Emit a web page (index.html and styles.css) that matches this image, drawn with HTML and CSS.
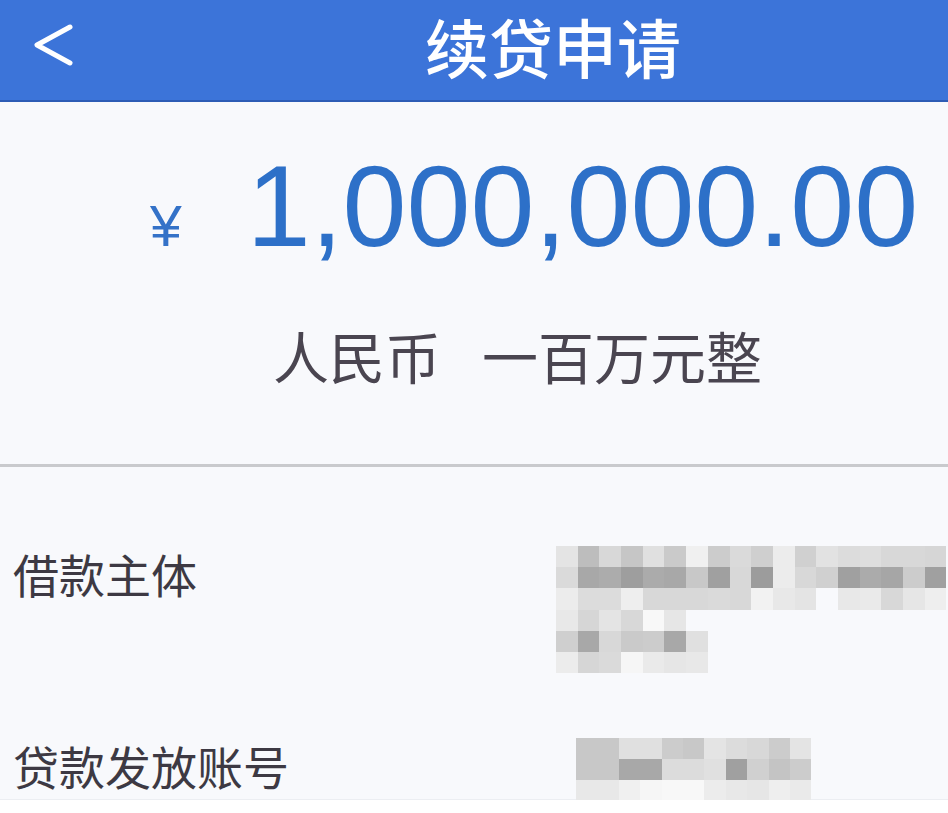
FILE: index.html
```html
<!DOCTYPE html>
<html>
<head>
<meta charset="UTF-8">
<title>续贷申请</title>
<link rel="stylesheet" href="styles.css">
</head>
<body>

	<div class="header">
		<a class="back">
			<svg width="42" height="44" viewBox="0 0 42 44"><polyline points="37,4 4,22 37,40" fill="none" stroke="#fff" stroke-width="5" stroke-linecap="round" stroke-linejoin="round"/></svg>
		</a>
		<h1 class="title">续贷申请</h1>
	</div>

	<div class="main">
		<div class="amount"><span class="yen">¥</span><span class="num">1,000,000.00</span></div>
		<div class="upper">人民币<span class="gap">一百万元整</span></div>
		<hr class="line">

		<div class="row">
			<div class="label">借款主体</div>
			<div class="mosaic" id="mosaic1"></div>
		</div>
		<div class="row row2">
			<div class="label">贷款发放账号</div>
			<div class="mosaic mosaic2" id="mosaic2"></div>
		</div>
	</div>

	<script>

		//가려진 영역 (모자이크)
		var m1 = [
			"e4 bd d8 c6 e0 ca f0 cc da cf ec d0 e2 dc de d8 d8 d6",
			"da a8 ac 9e ab a8 c8 a0 d8 9c ec d8 d0 a0 ab a6 cc a0",
			"ec dc dc ee d8 d8 d8 da d8 f2 e8 e4 -- e8 ea d8 e6 ee",
			"e8 d6 e4 d8 f8 e6",
			"cf a8 d8 ca cc a8 e0",
			"ec d6 da f6 ea e6 e8"
		];

		var m2 = [
			"c8 c8 e0 e0 cc c8 e4 dc d8 cc e4",
			"c8 c8 a8 a8 dc dc e0 a0 d0 c4 cc",
			"e8 e8 f0 f6 f8 f8 ec e8 e6 ee ea"
		];

		function fill(el, rows, cols) {
			for (var i=0; i<rows.length; i++) {
				var cells = rows[i].split(" ");
				for (var j=0; j<cols; j++) {
					var d = document.createElement("div");
					var c = cells[j];
					if (c && c != "--") {
						d.style.background = "#" + c + c + c;
					}
					el.appendChild(d);
				}
			}
		}

		fill(document.getElementById("mosaic1"), m1, 18);
		fill(document.getElementById("mosaic2"), m2, 11);

	</script>
</body>
</html>
```

FILE: styles.css
```css
body {
	margin: 0;
	background: #fff;
	font-family: "Noto Sans CJK SC", sans-serif;
}

.header {
	height: 100px;
	background: #3c74d9;
	border-bottom: 2px solid #2d5cb5;
	display: flex;
	align-items: flex-start;
}

.back {
	display: block;
	width: 42px;
	height: 44px;
	margin: 23px 0 0 33px;
}
.back svg {
	display: block;
}

.title {
	margin: 13px 0 0 350px;
	font-size: 64px;
	font-weight: 500;
	line-height: 64px;
	color: #fff;
}

.main {
	height: 697px;
	background: #f8f9fc;
	border-bottom: 1px solid #eceef2;
}

.amount {
	padding: 47px 0 0 150px;
	height: 121px;
	font-family: "Liberation Sans", Arial, sans-serif;
	font-size: 115px;
	line-height: 115px;
	color: #2d70c8;
	white-space: nowrap;
}
.yen {
	font-size: 57px;
	margin-right: 65px;
	vertical-align: 0;
	color: #3472c8;
}

.upper {
	margin-top: 57px;
	padding-left: 273px;
	font-size: 56px;
	line-height: 56px;
	color: #4a4550;
}
.upper .gap {
	margin-left: 41px;
}

.line {
	margin: 81px 0 0;
	height: 3px;
	border: 0;
	background: #c9cacd;
}

.row {
	display: flex;
	align-items: flex-start;
	margin-top: 79px;
}
.row2 {
	margin-top: 65px;
}

.label {
	width: 543px;
	padding-left: 13px;
	margin-top: 4px;
	font-size: 46px;
	line-height: 46px;
	color: #3d3943;
	flex-shrink: 0;
}

.mosaic {
	display: grid;
	grid-template-columns: repeat(18, 21.7px);
	grid-auto-rows: 21.2px;
	filter: blur(0.7px);
}
.mosaic2 {
	margin-left: 20px;
	grid-template-columns: repeat(11, 21.4px);
	grid-auto-rows: 21px;
}
```
